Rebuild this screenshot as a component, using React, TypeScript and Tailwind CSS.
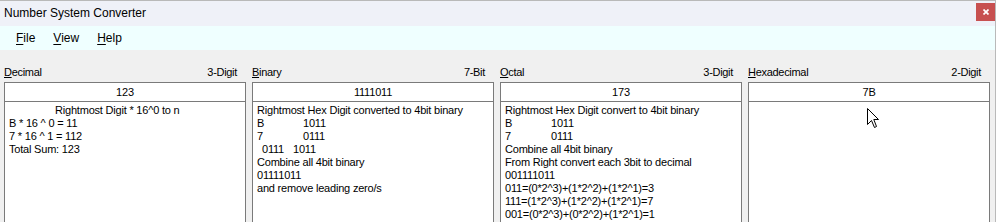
import React from 'react';

type Col = {
  label: string;
  key: string;
  rest: string;
  digits: string;
  value: string;
  lines: React.ReactNode[];
};

const Pair = ({ a, b }: { a: string; b: string }) => (
  <div>
    <span className="inline-block w-[46px]">{a}</span>
    {b}
  </div>
);

const cols: Col[] = [
  {
    label: 'Decimal',
    key: 'D',
    rest: 'ecimal',
    digits: '3-Digit',
    value: '123',
    lines: [
      <div key="a" className="pl-[46px]">Rightmost Digit * 16^0 to n</div>,
      <div key="b">B * 16 ^ 0 = 11</div>,
      <div key="c">7 * 16 ^ 1 = 112</div>,
      <div key="d">Total Sum: 123</div>,
    ],
  },
  {
    label: 'Binary',
    key: 'B',
    rest: 'inary',
    digits: '7-Bit',
    value: '1111011',
    lines: [
      <div key="a">Rightmost Hex Digit converted to 4bit binary</div>,
      <Pair key="b" a="B" b="1011" />,
      <Pair key="c" a="7" b="0111" />,
      <div key="d" className="pl-[5px]">
        <span className="inline-block w-[31px]">0111</span>1011
      </div>,
      <div key="e">Combine all 4bit binary</div>,
      <div key="f">01111011</div>,
      <div key="g">and remove leading zero/s</div>,
    ],
  },
  {
    label: 'Octal',
    key: 'O',
    rest: 'ctal',
    digits: '3-Digit',
    value: '173',
    lines: [
      <div key="a">Rightmost Hex Digit convert to 4bit binary</div>,
      <Pair key="b" a="B" b="1011" />,
      <Pair key="c" a="7" b="0111" />,
      <div key="d">Combine all 4bit binary</div>,
      <div key="e">From Right convert each 3bit to decimal</div>,
      <div key="f">001111011</div>,
      <div key="g">011=(0*2^3)+(1*2^2)+(1*2^1)=3</div>,
      <div key="h">111=(1*2^3)+(1*2^2)+(1*2^1)=7</div>,
      <div key="i">001=(0*2^3)+(0*2^2)+(1*2^1)=1</div>,
    ],
  },
  {
    label: 'Hexadecimal',
    key: 'H',
    rest: 'exadecimal',
    digits: '2-Digit',
    value: '7B',
    lines: [],
  },
];

function Column({ col, cursor }: { col: Col; cursor?: boolean }) {
  return (
    <div className="flex w-[242px] flex-col">
      <div className="flex h-[13px] items-center justify-between pr-[9px] text-[11px] leading-[13px] tracking-[-0.3px]">
        <span>
          <span className="underline underline-offset-[1px]">{col.key}</span>
          {col.rest}
        </span>
        <span>{col.digits}</span>
      </div>
      <div className="mt-[3px] flex h-[20px] items-center justify-center border border-[#7a7a7a] bg-white text-[11px] tracking-[-0.2px]">
        {col.value}
      </div>
      <div className="relative h-[140px] border-x border-b border-[#7a7a7a] bg-white px-[4px] pt-[2px] text-[11px] leading-[13px] tracking-[-0.2px] text-black">
        {col.lines}
        {cursor && (
          <svg
            className="absolute left-[118px] top-[6px]"
            width="13"
            height="21"
            viewBox="0 0 13 21"
          >
            <path
              d="M0.5 0.5 L0.5 16.5 L4.5 12.5 L7.5 19.5 L9.5 18.5 L6.8 11.5 L11.5 11.5 Z"
              fill="white"
              stroke="black"
              strokeWidth="1"
              strokeLinejoin="miter"
            />
          </svg>
        )}
      </div>
    </div>
  );
}

export default function App() {
  return (
    <div className="relative h-[222px] w-[996px] overflow-hidden border-t border-r border-[#b9b9b9] bg-[#f0f0f0] font-['Liberation_Sans',Arial,sans-serif] text-black">
      <div className="flex h-[25px] items-start justify-between bg-[#eff1f8]">
        <span className="pl-[4px] pt-[5px] text-[12px] leading-[15px]">Number System Converter</span>
        <div className="mt-[2px] flex h-[18px] w-[19px] items-center justify-center bg-[#c75050]">
          <svg width="6" height="6" viewBox="0 0 6 6">
            <path d="M0.5 0.5 L5.5 5.5 M5.5 0.5 L0.5 5.5" stroke="white" strokeWidth="1.7" />
          </svg>
        </div>
      </div>
      <div className="flex h-[24px] items-center gap-[18px] bg-[#efffff] pl-[16px] text-[12px]">
        <span>
          <span className="underline underline-offset-[2px]">F</span>ile
        </span>
        <span>
          <span className="underline underline-offset-[2px]">V</span>iew
        </span>
        <span>
          <span className="underline underline-offset-[2px]">H</span>elp
        </span>
      </div>
      <div className="flex gap-[6px] pl-[4px] pt-[16px]">
        {cols.map((c, i) => (
          <Column key={c.label} col={c} cursor={i === 3} />
        ))}
      </div>
    </div>
  );
}
